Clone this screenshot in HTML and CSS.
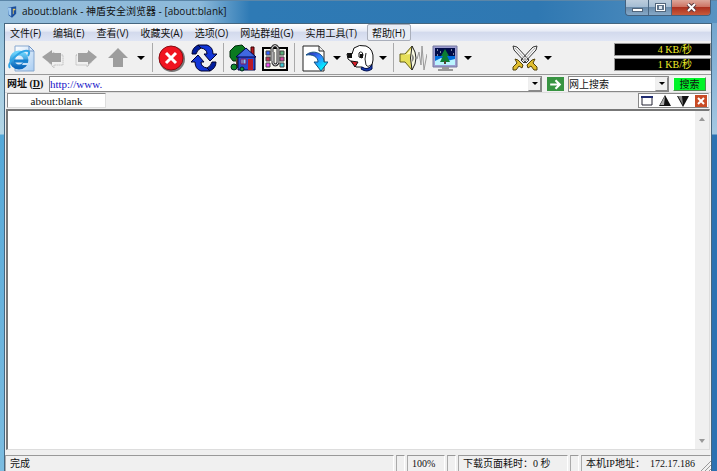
FILE: index.html
```
<!DOCTYPE html>
<html lang="zh-CN">
<head>
	<title>about:blank - 神盾安全浏览器</title>
	<meta charset="utf-8">
	<link rel="stylesheet" href="styles.css">
</head>
<body>

<div class="window">
	<header class="titlebar">
		<svg class="app-icon" viewBox="0 0 12 14"><path d="M1 2 L6 1 L11 0 V9 L6 14 L2 11Z" fill="#1c4f9c"/><path d="M1 2 L5 2 V12 L2 10Z" fill="#9cc8f0"/><path d="M7 3 H10 V5 H8 V9 L7 10Z" fill="#e8c860"/></svg>
		<h1>about:blank - 神盾安全浏览器 - [about:blank]</h1>
		<div class="window-buttons">
			<button type="button" class="minimize" aria-label="最小化"><svg width="11" height="8" viewBox="0 0 11 8"><rect x=".5" y="4.5" width="10" height="3" fill="#fff" stroke="#52667c"/></svg></button>
			<button type="button" class="maximize" aria-label="最大化"><svg width="11" height="9" viewBox="0 0 11 9"><rect x="1.5" y="1.5" width="8" height="6" fill="none" stroke="#52667c" stroke-width="3"/><rect x="1.5" y="1.5" width="8" height="6" fill="#60758c" stroke="#fff"/><rect x="4" y="3" width="3" height="3" fill="#dce6f0"/></svg></button>
			<button type="button" class="close" aria-label="关闭"><svg width="11" height="9" viewBox="0 0 11 9"><path d="M2 1 L9 8 M9 1 L2 8" stroke="#5c3a40" stroke-width="4"/><path d="M2 1 L9 8 M9 1 L2 8" stroke="#fff" stroke-width="2"/></svg></button>
		</div>
	</header>

	<div class="client">
		<nav class="menu">
			<button type="button">文件(F)</button>
			<button type="button">编辑(E)</button>
			<button type="button">查看(V)</button>
			<button type="button">收藏夹(A)</button>
			<button type="button">选项(O)</button>
			<button type="button">网站群组(G)</button>
			<button type="button">实用工具(T)</button>
			<button type="button" class="active">帮助(H)</button>
		</nav>

		<div class="toolbar">
			<div class="group">
				<button type="button" class="tool" aria-label="新建">
					<svg viewBox="0 0 28 28"><defs><linearGradient id="paper" x2="1" y2="1"><stop stop-color="#fff"/><stop offset="1" stop-color="#a9cdf2"/></linearGradient><linearGradient id="letter" x2="0" y2="1"><stop stop-color="#6cd2fa"/><stop offset="1" stop-color="#0c68bc"/></linearGradient></defs><path d="M7 2 H21 L26 7 V27 H7Z" fill="url(#paper)" stroke="#86a8d0"/><path d="M21 2 V7 H26Z" fill="#dcecff" stroke="#7195c5"/><circle cx="11" cy="16" r="7" fill="none" stroke="url(#letter)" stroke-width="5"/><path d="M6 17 H20" stroke="#1680cf" stroke-width="3"/><path d="M15 19 H22 V21 H14Z" fill="#c6dff8"/><path d="M2 24 C-2 19 13 5 20 7 C22 8 21 10 20 12" fill="none" stroke="#2ea4e6" stroke-width="2"/></svg>
				</button>
				<button type="button" class="tool" aria-label="后退">
					<svg viewBox="0 0 28 28"><path d="M6 15 L14 8 V11 H23 V21 H14 V24Z" fill="none" stroke="#aaa" stroke-dasharray="1 1"/><path d="M2 13 L12 6 V9 H21 V18 H12 V21Z" fill="#a0a0a0"/></svg>
				</button>
				<button type="button" class="tool" aria-label="前进">
					<svg viewBox="0 0 28 28"><path d="M4 11 H15 V8 L22 15 L15 23 V21 H4Z" fill="none" stroke="#aaa" stroke-dasharray="1 1"/><path d="M6 9 H16 V6 L25 13 L16 21 V18 H6Z" fill="#a0a0a0"/></svg>
				</button>
				<button type="button" class="tool" aria-label="向上">
					<svg viewBox="0 0 28 28"><path d="M14 4 L24 14 H19 V23 H9 V14 H4Z" fill="#9d9d9d"/></svg>
				</button>
				<button type="button" class="drop" aria-label="更多"><svg viewBox="0 0 8 4"><path d="M0 0 H8 L4 4Z"/></svg></button>
			</div>
			<div class="group">
				<button type="button" class="tool" aria-label="停止">
					<svg viewBox="0 0 28 28"><circle cx="14" cy="15" r="13" fill="#777"/><circle cx="13" cy="14" r="12" fill="#f01420" stroke="#8c0c12"/><path d="M8 9 L18 19 M18 9 L8 19" stroke="#fff" stroke-width="3"/></svg>
				</button>
				<button type="button" class="tool" aria-label="刷新">
					<svg viewBox="0 0 28 28"><g stroke="#00002c"><path d="M8 1 H17 Q23 3 23 10 H27 L20 17 L14 10 H17 Q17 5 11 4Z" fill="#1236d8"/><path d="M20 27 H11 Q5 25 5 18 H1 L8 11 L14 18 H11 Q11 23 17 24Z" fill="#1236d8"/><path d="M2 10 Q2 4 8 1 L11 4 Q7 6 6 10Z" fill="#001ea0"/><path d="M26 18 Q26 24 20 27 L17 24 Q21 22 22 18Z" fill="#001ea0"/></g></svg>
				</button>
			</div>
			<div class="group">
				<button type="button" class="tool" aria-label="主页">
					<svg viewBox="0 0 28 28"><path d="M6 2 L13 1 L17 5 V14 L11 17 H4 L1 13 V7Z" fill="#0b7a20" stroke="#002808"/><path d="M7 15 H11 V24 H7Z" fill="#644020"/><path d="M22 3 H25 V12 H22Z" fill="#b81820" stroke="#300"/><path d="M9 12 H26 V26 H9Z" fill="#2848d0" stroke="#000040"/><path d="M7 13 L17 4 L27 13Z" fill="#4068e0" stroke="#000048"/><path d="M19 15 H24 V26 H19Z" fill="#b81828"/><path d="M12 15 H17 V20 H12Z" fill="#7fc8ff" stroke="#801860"/><path d="M14 15 V20" stroke="#801860"/><circle cx="5" cy="23" r="3" fill="#118828" stroke="#022"/><circle cx="13" cy="25" r="2" fill="#18a038" stroke="#022"/></svg>
				</button>
				<button type="button" class="tool" aria-label="收藏">
					<svg viewBox="0 0 28 28"><path d="M2 4 H26 V26 H2Z" fill="#f6f6ee" stroke="#000" stroke-width="2"/><g stroke="#444"><path d="M5 7 H9 V11 H5Z" fill="#3060ff"/><path d="M5 13 H9 V17 H5Z" fill="#c03050"/><path d="M5 19 H9 V23 H5Z" fill="#f048f0"/><path d="M19 7 H23 V11 H19Z" fill="#58b078"/><path d="M19 13 H23 V17 H19Z" fill="#d444a0"/><path d="M19 19 H23 V23 H19Z" fill="#38c8d8"/></g><path d="M12 8 V19 Q14 23 17 19 V4 Q14 -1 11 4 V17" fill="none" stroke="#333" stroke-width="3"/><path d="M12 8 V19 Q14 23 17 19 V4 Q14 -1 11 4 V17" fill="none" stroke="#ddd"/></svg>
				</button>
			</div>
			<div class="group">
				<button type="button" class="tool" aria-label="跳转">
					<svg viewBox="0 0 28 28"><defs><linearGradient id="jump" x2="1" y2="1"><stop stop-color="#281898"/><stop offset=".4" stop-color="#3478ff"/><stop offset=".8" stop-color="#00f4ff"/></linearGradient></defs><path d="M3 2 H19 L24 7 V27 H3Z" fill="#fff" stroke="#222"/><path d="M19 2 V7 H24" fill="#eee" stroke="#222"/><path d="M6 11 C13 5 24 9 24 18 H28 L21 27 L14 18 H18 C18 13 13 10 6 11Z" fill="url(#jump)" stroke="#105080"/></svg>
				</button>
				<button type="button" class="drop" aria-label="跳转菜单"><svg viewBox="0 0 8 4"><path d="M0 0 H8 L4 4Z"/></svg></button>
				<button type="button" class="tool" aria-label="搜狗">
					<svg viewBox="0 0 28 28"><path d="M6 10 L8 4 Q13 0 20 2 Q28 5 27 16 Q27 22 23 24 L18 25 L16 23 L10 23 L6 18 L2 15 L1 10Z" fill="#fff" stroke="#111"/><path d="M20 9 Q18 15 20 21 Q22 24 26 20" fill="none" stroke="#222"/><path d="M1 9 L6 9 L6 14 H2Z" fill="#111"/><path d="M5 17 L12 18 L9 23Z" fill="#d81e28" stroke="#111"/><path d="M13 9 Q16 6 17 11 L16 14 L13 13Z" fill="#fff" stroke="#111"/><path d="M14 10 H17 V14 H14Z" fill="#111"/><path d="M16 23 Q22 27 26 21 L26 25 Q21 29 15 25Z" fill="#173ab0" stroke="#001050"/></svg>
				</button>
				<button type="button" class="drop" aria-label="搜索菜单"><svg viewBox="0 0 8 4"><path d="M0 0 H8 L4 4Z"/></svg></button>
			</div>
			<div class="group">
				<button type="button" class="tool" aria-label="声音">
					<svg viewBox="0 0 28 28"><path d="M1 10 H6 L13 2 Q19 14 13 26 L6 18 H1Z" fill="#e6df58" stroke="#655f16"/><path d="M2 11 H7 L12 5 V10Z" fill="#fffbc0"/><path d="M13 2 Q21 14 13 26 Q10 14 13 2Z" fill="#f8f8e0" stroke="#222"/><path d="M13 10 Q17 14 13 18Z" fill="#888"/><path d="M18 15 L20 8 L22 21 L23 2 L24 14 L25 26 L28 10" fill="none" stroke="#999"/></svg>
				</button>
				<button type="button" class="tool" aria-label="壁纸">
					<svg viewBox="0 0 28 28"><path d="M2 2 H26 V23 H2Z" fill="#9c9cd0" stroke="#75789f"/><path d="M4 4 H24 V21 H4Z" fill="#000c48"/><path d="M4 12 H24 V17 H4Z" fill="#006cdc"/><path d="M4 17 L10 14 L16 17 L24 15 V21 H4Z" fill="#baf4ff"/><path d="M14 5 L18 12 H16 L19 18 H9 L12 12 H10Z" fill="#0b7d32"/><path d="M14 17 V20" stroke="#543" stroke-width="2"/><path d="M6 6h1M9 8h1M20 6h1M22 10h1M6 11h1" stroke="#fff"/><path d="M11 23 H18 V25 H22 V27 H7 V25 H11Z" fill="#999"/></svg>
				</button>
				<button type="button" class="drop" aria-label="壁纸菜单"><svg viewBox="0 0 8 4"><path d="M0 0 H8 L4 4Z"/></svg></button>
			</div>
			<div class="group extra">
				<button type="button" class="tool" aria-label="清理">
					<svg viewBox="0 0 28 28"><path d="M2 2 L6 3 L18 16 L15 19 L3 6Z M26 2 L22 3 L10 16 L13 19 L25 6Z" fill="#f8f8f8" stroke="#333"/><path d="M4 4 L16 17 M24 4 L12 17" stroke="#aaa"/><path d="M4 15 L7 16 L12 21 L11 24 L8 22 L5 26 H2 V23 L6 19Z M24 15 L21 16 L16 21 L17 24 L20 22 L23 26 H26 V23 L22 19Z" fill="#e0bd2e" stroke="#514008"/></svg>
				</button>
				<button type="button" class="drop" aria-label="清理菜单"><svg viewBox="0 0 8 4"><path d="M0 0 H8 L4 4Z"/></svg></button>
			</div>
			<div class="speed">
				<div>4 KB/秒</div>
				<div>1 KB/秒</div>
			</div>
		</div>

		<form class="address">
			<label for="url">网址 (<u>D</u>)</label>
			<div class="combo url">
				<input type="text" id="url" value="http://www.">
				<button type="button" aria-label="历史"><svg viewBox="0 0 6 3"><path d="M0 0 H6 L3 3Z"/></svg></button>
			</div>
			<button type="button" class="go" aria-label="转到"><svg viewBox="0 0 16 14"><path d="M3 7 H12 M8 3 L12 7 L8 11" fill="none" stroke="#fff" stroke-width="2"/></svg></button>
			<div class="combo search-type">
				<select aria-label="搜索类型"><option>网上搜索</option></select>
				<span class="arrow"><svg viewBox="0 0 6 3"><path d="M0 0 H6 L3 3Z"/></svg></span>
			</div>
			<button type="button" class="search">搜索</button>
		</form>

		<div class="tabs">
			<button type="button" class="tab">about:blank</button>
			<div class="tab-tools">
				<button type="button" aria-label="还原"><svg viewBox="0 0 12 12"><path d="M1 2 H11 V10 H1Z" fill="#fff" stroke="#223"/><path d="M0 1 H12 V3 H0Z" fill="#202c70"/></svg></button>
				<button type="button" aria-label="上移"><svg viewBox="0 0 12 12"><path d="M6 0 L12 11 H0Z" fill="#111"/><path d="M6 1 L5 10 H1Z" fill="#aaa"/></svg></button>
				<button type="button" aria-label="下移"><svg viewBox="0 0 12 12"><path d="M0 1 H12 L6 12Z" fill="#111"/><path d="M1 1 H5 L6 10Z" fill="#888"/></svg></button>
				<button type="button" aria-label="关闭标签"><svg viewBox="0 0 12 12"><path d="M0 0 H12 V12 H0Z" fill="#c94b25"/><path d="M3 3 L9 9 M9 3 L3 9" stroke="#fff" stroke-width="2"/></svg></button>
			</div>
		</div>

		<main class="page">
			<div class="scrollbar">
				<svg viewBox="0 0 6 4"><path d="M3 0 L6 4 H0Z"/></svg>
				<svg viewBox="0 0 6 4"><path d="M0 0 H6 L3 4Z"/></svg>
			</div>
		</main>

		<footer class="status">
			<span class="message">完成</span>
			<span class="spacer"></span>
			<span class="zoom">100%</span>
			<span class="spacer"></span>
			<span class="elapsed">下载页面耗时：0 秒</span>
			<span class="spacer"></span>
			<span class="address-ip">本机IP地址：&nbsp;&nbsp;172.17.186</span>
			<svg class="grip" viewBox="0 0 10 10"><path d="M0 10 L10 0 M4 10 L10 4 M8 10 L10 8" stroke="#999"/></svg>
		</footer>
	</div>
</div>

</body>
</html>
```
FILE: styles.css
```
* {
	box-sizing: border-box;
}

body {
	margin: 0;
	font-family: "Open Sans", "Noto Sans CJK SC", sans-serif;
	font-size: 10px;
	color: #111;
}

button, input, select {
	margin: 0;
	padding: 0;
	border: none;
	background: none;
	font: inherit;
	color: inherit;
}

svg {
	display: block;
}

.window {
	display: flex;
	flex-direction: column;
	height: 100vh;
	padding: 0 5px 0 4px;
	overflow: hidden;
	background:
		linear-gradient(#8fbfdc 0, #b4d6e6 134px, #54a8d8 135px, #7cbce0 100%) left / 5px 100% no-repeat,
		linear-gradient(#6a9fca 0, #a5c8e2 134px, #2c72b2 135px, #2c72b2 100%) right / 5px 100% no-repeat;
}

/* Title bar */
.titlebar {
	display: flex;
	flex: none;
	height: 23px;
	margin: 0 -5px 0 -4px;
	padding: 0 6px 0 7px;
	background: linear-gradient(to right, #94bddb 0, #8cb9da 200px, #2e7ab5 250px, #2f78b2 75%, #5993c2 100%);
	border-top: 1px solid #5b86a8;
}

.app-icon {
	width: 10px;
	height: 14px;
	margin-top: 4px;
}

.titlebar h1 {
	flex: 1;
	margin: 0 0 0 5px;
	font-size: 10px;
	font-weight: normal;
	line-height: 21px;
	white-space: nowrap;
}

.window-buttons {
	display: flex;
	height: 16px;
	margin-top: -1px;
	border: 1px solid #44617e;
	border-top: none;
	border-radius: 0 0 4px 4px;
	overflow: hidden;
}

.window-buttons button {
	display: flex;
	align-items: center;
	justify-content: center;
	width: 23px;
	border-right: 1px solid #4a6783;
	background: linear-gradient(#bccddd 0, #a5bdd4 45%, #6b8cab 50%, #87a9c8 100%);
}

.window-buttons .close {
	width: 38px;
	border-right: none;
	background: linear-gradient(#dda79b 0, #cd7464 45%, #ad3120 50%, #c75a3c 100%);
}

.client {
	display: flex;
	flex: 1;
	flex-direction: column;
	min-height: 0;
	border: 1px solid #45667f;
	border-bottom: none;
	background: #f0f0f0;
}

/* Menu */
.menu {
	display: flex;
	flex: none;
	height: 17px;
	gap: 1px;
	background: linear-gradient(#fff 0, #e8ecf6 40%, #d3daed 50%, #dfe5f4 100%);
}

.menu button {
	padding: 0 5px 0 4px;
	border: 1px solid transparent;
	border-radius: 2px;
	line-height: 14px;
	white-space: nowrap;
}

.menu .active {
	margin-left: 3px;
	border-color: #a9aeba;
	background: #e9edf5;
}

/* Toolbar */
.toolbar {
	display: flex;
	flex: none;
	height: 34px;
	border-bottom: 1px solid #999;
	background: #f0f0f0;
}

.group {
	display: flex;
	align-items: center;
	margin: 2px 0;
	padding: 0 3px;
	border-left: 1px solid #aaa;
}

.group:first-child {
	padding: 0 4px 0 1px;
	border-left: none;
}

.tool {
	width: 32px;
}

.tool svg {
	width: 28px;
	height: 28px;
	margin: 0 auto;
}

.drop {
	width: 14px;
}

.drop svg {
	width: 8px;
	height: 4px;
	margin: 0 auto;
}

.extra {
	margin-left: 28px;
	border-left: none;
}

.speed {
	width: 97px;
	margin: 2px 0 0 auto;
	color: #f3ef28;
	font-family: "Liberation Serif", "Noto Sans CJK SC", serif;
}

.speed div {
	height: 13px;
	margin-bottom: 2px;
	padding-right: 18px;
	border: 1px solid #999;
	background: #000;
	line-height: 11px;
	text-align: right;
}

/* Address bar */
.address {
	display: flex;
	flex: none;
	align-items: center;
	height: 17px;
	padding: 0 5px 0 2px;
}

.address label {
	width: 42px;
	font-family: "Liberation Serif", "Noto Sans CJK SC", serif;
	font-weight: bold;
	line-height: 15px;
	white-space: nowrap;
}

.combo {
	display: flex;
	position: relative;
	height: 16px;
	border: 1px solid #888;
	background: #fff;
}

.combo.url {
	flex: 1;
	min-width: 0;
}

.combo input {
	flex: 1;
	min-width: 0;
	color: #1414c8;
	font-family: "Liberation Serif", serif;
	font-size: 11px;
}

.combo button,
.combo .arrow {
	display: flex;
	align-items: center;
	justify-content: center;
	width: 13px;
	height: 14px;
	border: 1px solid #888;
	border-top-color: #eee;
	border-left-color: #eee;
	background: #f0f0f0;
}

.combo svg {
	width: 6px;
	height: 3px;
}

.go {
	width: 17px;
	height: 14px;
	margin: 0 4px 0 5px;
	background: #389442;
}

.search-type {
	width: 101px;
}

.search-type select {
	width: 100%;
	appearance: none;
	line-height: 14px;
}

.search-type .arrow {
	position: absolute;
	top: 0;
	right: 0;
	pointer-events: none;
}

.search {
	width: 33px;
	height: 14px;
	margin-left: 4px;
	border: 1px solid #508850;
	border-top-color: #efe;
	border-left-color: #efe;
	background: #00f428;
	line-height: 12px;
}

/* Tabs */
.tabs {
	display: flex;
	flex: none;
	justify-content: space-between;
	height: 17px;
	padding: 0 2px;
	border-top: 1px solid #ddd;
}

.tab {
	width: 99px;
	height: 15px;
	border: 1px solid #888;
	border-right-color: #ddd;
	border-bottom-color: #ddd;
	background: #fff;
	font-family: "Liberation Serif", serif;
	font-size: 11px;
	line-height: 12px;
}

.tab-tools {
	display: flex;
	align-items: center;
	justify-content: space-between;
	width: 71px;
	height: 15px;
	padding: 0 1px 0 2px;
	border: 1px solid #888;
	border-right-color: #ddd;
	background: #fff;
}

.tab-tools svg {
	width: 12px;
	height: 12px;
}

/* Page area */
.page {
	display: flex;
	flex: 1;
	justify-content: flex-end;
	min-height: 0;
	margin: 0 1px 5px;
	border: 2px solid #777;
	border-right: 1px solid #ddd;
	border-bottom: 1px solid #ddd;
	background: #fff;
}

.scrollbar {
	display: flex;
	flex-direction: column;
	justify-content: space-between;
	align-items: center;
	width: 14px;
	padding: 6px 0;
	background: #f0f0f0;
	fill: #999;
}

.scrollbar svg {
	width: 6px;
	height: 4px;
}

/* Status bar */
.status {
	display: flex;
	flex: none;
	position: relative;
	gap: 2px;
	height: 16px;
	font-family: "Liberation Serif", "Noto Sans CJK SC", serif;
	line-height: 16px;
	white-space: nowrap;
}

.status span {
	padding-left: 4px;
	border-top: 1px solid #999;
	border-left: 1px solid #aaa;
	border-right: 1px solid #fff;
	overflow: hidden;
}

.status .message {
	flex: 1;
}

.status .spacer {
	width: 9px;
	padding: 0;
}

.status .zoom {
	width: 38px;
}

.status .elapsed {
	width: 110px;
}

.status .address-ip {
	width: 130px;
	padding-right: 10px;
}

.grip {
	position: absolute;
	right: 0;
	bottom: 0;
	width: 10px;
	height: 10px;
}
```
